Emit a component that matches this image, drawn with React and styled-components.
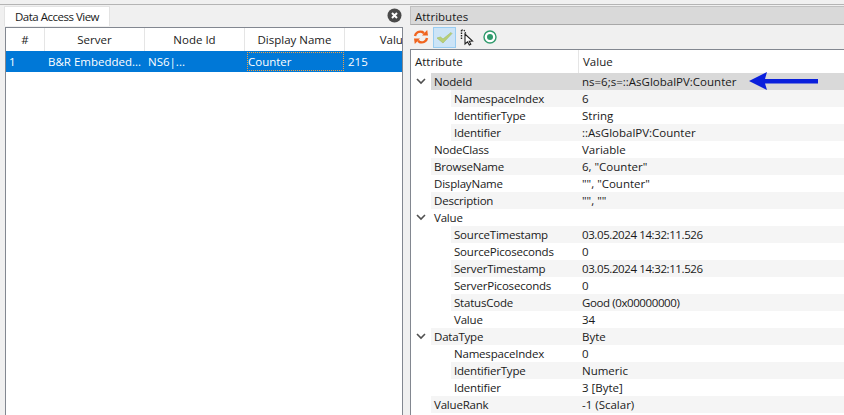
import React from 'react';
import styled, { createGlobalStyle } from 'styled-components';

const GlobalStyle = createGlobalStyle`
    html, body {
        margin: 0;
        padding: 0;
        background: #f0f0f0;
    }
    body {
        font-family: 'Open Sans', 'Noto Sans', 'Liberation Sans', sans-serif;
        font-size: 11.5px;
        color: #1a1a1a;
    }
`;

const Screen = styled.div`
    width: 844px;
    height: 415px;
    overflow: hidden;
    position: relative;
    box-sizing: border-box;
    padding-top: 5px;
    display: flex;
    background: #f0f0f0;
    &::before {
        content: '';
        position: absolute;
        left: 0;
        right: 0;
        top: 4px;
        height: 1px;
        background: #b4b4b4;
    }
`;

const LeftPane = styled.div`
    width: 403px;
    flex-shrink: 0;
    display: flex;
    flex-direction: column;
    padding-left: 5px;
    box-sizing: border-box;
`;

const TabBar = styled.div`
    height: 21px;
    margin-top: 1px;
    display: flex;
    justify-content: space-between;
    align-items: flex-start;
    flex-shrink: 0;
`;

const Tab = styled.div`
    width: 106px;
    height: 20px;
    margin-left: -1px;
    box-sizing: border-box;
    background: #fff;
    border: 1px solid #e3e3e3;
    border-bottom: none;
    padding-left: 10px;
    line-height: 19px;
    letter-spacing: -0.5px;
    white-space: nowrap;
`;

const CloseButton = styled.svg`
    width: 15px;
    height: 15px;
    margin: 2px 1px 0 0;
`;

const TableFrame = styled.div`
    flex: 1;
    background: #fff;
    border: 1px solid #828790;
    border-bottom: none;
    overflow: hidden;
`;

const TableHeader = styled.div`
    display: flex;
    height: 23px;
`;

const HeaderCell = styled.div`
    width: ${(props) => props.$width}px;
    flex-shrink: 0;
    box-sizing: border-box;
    border-right: 1px solid #e5e5e5;
    text-align: center;
    line-height: 24px;
    white-space: nowrap;
`;

const TableRow = styled.div`
    display: flex;
    height: 21px;
    background: #0078d7;
    color: #fff;
`;

const TableCell = styled.div`
    width: ${(props) => props.$width}px;
    flex-shrink: 0;
    box-sizing: border-box;
    padding-left: ${(props) => (props.$focus ? 1 : 3)}px;
    line-height: 21px;
    white-space: nowrap;
`;

const FocusBox = styled.div`
    height: 19px;
    width: 97px;
    box-sizing: border-box;
    margin: 1px 0 0 1px;
    border: 1px dotted #f0a040;
    line-height: 18px;
`;

const RightPane = styled.div`
    flex: 1;
    display: flex;
    flex-direction: column;
    padding-left: 7px;
    min-width: 0;
`;

const TitleBar = styled.div`
    height: 19px;
    margin-top: 1px;
    flex-shrink: 0;
    box-sizing: border-box;
    background: #d9d9d9;
    border: 1px solid #c0c0c0;
    border-right: none;
    border-bottom: 1px solid #a8a8a8;
    padding-left: 4px;
    line-height: 19px;
`;

const Toolbar = styled.div`
    height: 24px;
    flex-shrink: 0;
    display: flex;
    align-items: center;
    padding-left: 2px;
`;

const ToolButton = styled.div`
    width: ${(props) => props.$width}px;
    height: 21px;
    margin-right: ${(props) => props.$gap || 0}px;
    box-sizing: border-box;
    display: flex;
    align-items: center;
    justify-content: center;
    border: 1px solid ${(props) => (props.$active ? '#99cdf2' : 'transparent')};
    background: ${(props) => (props.$active ? '#cce4f7' : 'transparent')};
`;

const TreeFrame = styled.div`
    flex: 1;
    background: #fff;
    border: 1px solid #828790;
    border-right: none;
    border-bottom: none;
    overflow: hidden;
`;

const TreeHeader = styled.div`
    display: flex;
    height: 23px;
    line-height: 24px;
`;

const TreeHeaderCell = styled.div`
    width: ${(props) => props.$width || 'auto'};
    flex: ${(props) => (props.$width ? '0 0 auto' : 1)};
    box-sizing: border-box;
    padding-left: 4px;
    border-right: ${(props) => (props.$width ? '1px solid #e5e5e5' : 'none')};
`;

const TreeRow = styled.div`
    display: flex;
    height: 17px;
    line-height: 18px;
`;

const Expander = styled.div`
    width: ${(props) => props.$indent}px;
    flex-shrink: 0;
    display: flex;
    align-items: center;
    padding-left: 5px;
    box-sizing: border-box;
`;

const RowBody = styled.div`
    flex: 1;
    display: flex;
    background: ${(props) => (props.$selected ? '#d9d9d9' : props.$odd ? '#f5f5f5' : '#fff')};
`;

const NameCell = styled.div`
    width: ${(props) => props.$width}px;
    flex-shrink: 0;
    box-sizing: border-box;
    padding-left: 3px;
    letter-spacing: -0.2px;
    white-space: nowrap;
`;

const ValueCell = styled.div`
    flex: 1;
    padding-left: 4px;
    letter-spacing: ${(props) => (props.$tight ? '-0.4px' : '0')};
    white-space: nowrap;
`;

const Pointer = styled.svg`
    position: absolute;
    left: 748px;
    top: 71px;
    width: 72px;
    height: 20px;
`;

const columns = [
    { label: '#', width: 39, cell: '1' },
    { label: 'Server', width: 100, cell: 'B&R Embedded...' },
    { label: 'Node Id', width: 100, cell: 'NS6|...' },
    { label: 'Display Name', width: 100, cell: 'Counter', focus: true },
    { label: 'Value', width: 100, cell: '215' },
];

const attributes = [
    { name: 'NodeId', value: 'ns=6;s=::AsGlobalPV:Counter', open: true, selected: true },
    { name: 'NamespaceIndex', value: '6', level: 1 },
    { name: 'IdentifierType', value: 'String', level: 1 },
    { name: 'Identifier', value: '::AsGlobalPV:Counter', level: 1 },
    { name: 'NodeClass', value: 'Variable' },
    { name: 'BrowseName', value: '6, "Counter"' },
    { name: 'DisplayName', value: '"", "Counter"' },
    { name: 'Description', value: '"", ""' },
    { name: 'Value', value: '', open: true },
    { name: 'SourceTimestamp', value: '03.05.2024 14:32:11.526', level: 1, tight: true },
    { name: 'SourcePicoseconds', value: '0', level: 1 },
    { name: 'ServerTimestamp', value: '03.05.2024 14:32:11.526', level: 1, tight: true },
    { name: 'ServerPicoseconds', value: '0', level: 1 },
    { name: 'StatusCode', value: 'Good (0x00000000)', level: 1, tight: true },
    { name: 'Value', value: '34', level: 1 },
    { name: 'DataType', value: 'Byte', open: true },
    { name: 'NamespaceIndex', value: '0', level: 1 },
    { name: 'IdentifierType', value: 'Numeric', level: 1 },
    { name: 'Identifier', value: '3 [Byte]', level: 1 },
    { name: 'ValueRank', value: '-1 (Scalar)' },
];

function Chevron() {
    return (
        <svg width="10" height="7" viewBox="0 0 10 7">
            <path d="M1 1 L5 5 L9 1" fill="none" stroke="#505050" strokeWidth="1.6" />
        </svg>
    );
}

function RefreshIcon() {
    return (
        <svg width="16" height="16" viewBox="0 0 16 16">
            <path d="M2 7 C2.5 3.5 6 1.8 9.5 3 L11 4.2" fill="none" stroke="#f0641e" strokeWidth="2.4" />
            <path d="M9 6.6 L15 6.6 L14.2 1 Z" fill="#f0641e" />
            <path d="M14 9 C13.5 12.5 10 14.2 6.5 13 L5 11.8" fill="none" stroke="#f0641e" strokeWidth="2.4" />
            <path d="M7 9.4 L1 9.4 L1.8 15 Z" fill="#f0641e" />
        </svg>
    );
}

function CheckIcon() {
    return (
        <svg width="17" height="14" viewBox="0 0 17 14">
            <path d="M1 8 L4.5 7 L7 9 L15 2.5 L16 3.5 L7 13 Z" fill="#b9d078" stroke="#a3ba62" strokeWidth="0.6" />
        </svg>
    );
}

function CursorIcon() {
    return (
        <svg width="14" height="17" viewBox="0 0 14 17">
            <path d="M1.5 1 V11" stroke="#222" strokeWidth="1.4" strokeDasharray="1.5 1" fill="none" />
            <path d="M1.5 1 H4 L6 5" stroke="#222" strokeWidth="1.2" strokeDasharray="1.5 1" fill="none" />
            <path d="M5 5 V15 L7.5 12.8 L9.3 16 L10.8 15.2 L9.2 12.2 L12.5 12 Z" fill="#fff" stroke="#222" strokeWidth="1.1" />
        </svg>
    );
}

function TargetIcon() {
    return (
        <svg width="14" height="14" viewBox="0 0 14 14">
            <circle cx="7" cy="7" r="6" fill="#fff" stroke="#2f9a6c" strokeWidth="1.4" />
            <circle cx="7" cy="7" r="3" fill="#2f9a6c" />
        </svg>
    );
}

function App() {
    return (
        <Screen>
            <GlobalStyle />
            <LeftPane>
                <TabBar>
                    <Tab>Data Access View</Tab>
                    <CloseButton viewBox="0 0 15 15">
                        <circle cx="7.5" cy="7.5" r="7" fill="#4a4a4a" />
                        <path d="M5 5 L10 10 M10 5 L5 10" stroke="#fff" strokeWidth="2" />
                    </CloseButton>
                </TabBar>
                <TableFrame>
                    <TableHeader>
                        {columns.map((col) => (
                            <HeaderCell key={col.label} $width={col.width}>
                                {col.label}
                            </HeaderCell>
                        ))}
                    </TableHeader>
                    <TableRow>
                        {columns.map((col) => (
                            <TableCell key={col.label} $width={col.width} $focus={col.focus}>
                                {col.focus ? <FocusBox>{col.cell}</FocusBox> : col.cell}
                            </TableCell>
                        ))}
                    </TableRow>
                </TableFrame>
            </LeftPane>
            <RightPane>
                <TitleBar>Attributes</TitleBar>
                <Toolbar>
                    <ToolButton $width={18} $gap={3}>
                        <RefreshIcon />
                    </ToolButton>
                    <ToolButton $width={23} $gap={2} $active>
                        <CheckIcon />
                    </ToolButton>
                    <ToolButton $width={17} $gap={6}>
                        <CursorIcon />
                    </ToolButton>
                    <ToolButton $width={18}>
                        <TargetIcon />
                    </ToolButton>
                </Toolbar>
                <TreeFrame>
                    <TreeHeader>
                        <TreeHeaderCell $width="168px">Attribute</TreeHeaderCell>
                        <TreeHeaderCell>Value</TreeHeaderCell>
                    </TreeHeader>
                    {attributes.map((row, i) => {
                        const indent = row.level ? 40 : 20;
                        return (
                            <TreeRow key={i}>
                                <Expander $indent={indent}>{row.open && <Chevron />}</Expander>
                                <RowBody $selected={row.selected} $odd={i % 2 === 1}>
                                    <NameCell $width={167 - indent}>{row.name}</NameCell>
                                    <ValueCell $tight={row.tight}>{row.value}</ValueCell>
                                </RowBody>
                            </TreeRow>
                        );
                    })}
                </TreeFrame>
            </RightPane>
            <Pointer viewBox="0 0 72 20">
                <path d="M1 10 L19 1 L17 8 L70 8 L70 12.5 L17 12.5 L19 19 Z" fill="#0a1fdc" />
            </Pointer>
        </Screen>
    );
}

export default App;
